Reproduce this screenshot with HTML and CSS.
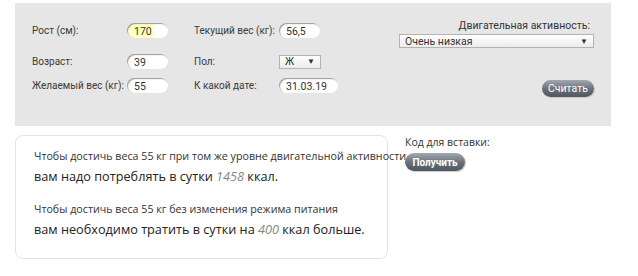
FILE: index.html
```html
<!DOCTYPE html>
<html lang="ru">
<head>
    <meta charset="UTF-8">
    <title>Калькулятор калорий</title>
    <link rel="stylesheet" href="styles.css">
</head>
<body>
    <form class="calc">
        <div class="fields">
            <div class="row">
                <label class="lbl">Рост (см):</label>
                <input class="field filled" type="text" value="170">
                <label class="lbl lbl2">Текущий вес (кг):</label>
                <input class="field" type="text" value="56,5">
            </div>
            <div class="row">
                <label class="lbl">Возраст:</label>
                <input class="field" type="text" value="39">
                <label class="lbl lbl2">Пол:</label>
                <div class="small-select">Ж <span class="arrow">&#9660;</span></div>
            </div>
            <div class="row">
                <label class="lbl">Желаемый вес (кг):</label>
                <input class="field" type="text" value="55">
                <label class="lbl lbl2">К какой дате:</label>
                <input class="field wide" type="text" value="31.03.19">
            </div>
        </div>
        <div class="activity">
            <label class="act-lbl">Двигательная активность:</label>
            <div class="big-select">Очень низкая <span class="arrow">&#9660;</span></div>
            <button type="button" class="btn btn-calc">Считать</button>
        </div>
    </form>

    <div class="bottom">
        <div class="result">
            <p class="note">Чтобы достичь веса 55 кг при том же уровне двигательной активности</p>
            <p class="main">вам надо потреблять в сутки <em>1458</em> ккал.</p>
            <p class="note">Чтобы достичь веса 55 кг без изменения режима питания</p>
            <p class="main">вам необходимо тратить в сутки на <em>400</em> ккал больше.</p>
        </div>
        <div class="embed">
            <p>Код для вставки:</p>
            <button type="button" class="btn btn-get">Получить</button>
        </div>
    </div>
</body>
</html>
```

FILE: styles.css
```css
* {
    margin: 0;
    padding: 0;
    box-sizing: border-box;
}

body {
    background: #fff;
    color: #333;
    font-family: Roboto, sans-serif;
    padding: 3px 0 0 15px;
    width: 611px;
}

.calc {
    display: flex;
    justify-content: space-between;
    background-color: #e6e6e6;
    height: 123px;
    padding: 20px 17px 0 17px;
}

.fields {
    display: flex;
    flex-direction: column;
    gap: 9px;
}

.row {
    display: flex;
    align-items: center;
    height: 15px;
}

.row:nth-child(2) {
    margin-top: 7px;
}

.lbl {
    font-size: 10px;
    color: #3a3a3a;
    width: 95px;
    white-space: nowrap;
}

.lbl2 {
    width: 85px;
    margin-left: 26px;
}

.field {
    width: 41px;
    height: 15px;
    border: none;
    border-radius: 8px;
    background: #fff;
    box-shadow: inset 1px 1px 1px #999;
    font-family: Roboto, sans-serif;
    font-size: 10.5px;
    color: #333;
    padding: 1px 0 0 7px;
    outline: none;
}

.field.filled {
    background: linear-gradient(to right, #fff 3px, #ffffc0 3px, #ffffc0 27px, #fff 27px);
}

.field.wide {
    width: 59px;
}

.small-select {
    width: 42px;
    height: 14px;
    border: 1px solid #b3b3b3;
    background: linear-gradient(#fff, #ececec);
    font-size: 10px;
    display: flex;
    align-items: center;
    justify-content: space-between;
    padding: 0 5px;
}

.arrow {
    font-size: 8px;
    color: #333;
}

.activity {
    display: flex;
    flex-direction: column;
    align-items: flex-end;
    margin-top: -4px;
}

.act-lbl {
    font-size: 10.5px;
    color: #333;
    margin-right: 4px;
    margin-bottom: 2px;
}

.big-select {
    width: 195px;
    height: 14px;
    border: 1px solid #b3b3b3;
    background: linear-gradient(#fff, #ececec);
    font-size: 10.5px;
    display: flex;
    align-items: center;
    justify-content: space-between;
    padding: 0 5px;
}

.btn {
    border: none;
    border-radius: 9px;
    background: linear-gradient(#a3a9b0, #6a737c 50%, #4e565e);
    color: #fff;
    font-family: Roboto, sans-serif;
    font-size: 10.5px;
    height: 17px;
    box-shadow: 1px 1px 1px #c8c8c8;
}

.btn-calc {
    width: 52px;
    margin-top: 32px;
}

.bottom {
    display: flex;
    margin-top: 9px;
}

.result {
    width: 373px;
    height: 124px;
    border: 1px solid #e3e3e3;
    border-radius: 8px;
    padding: 13px 0 0 18px;
    font-family: "Open Sans", sans-serif;
    white-space: nowrap;
}

.note {
    font-size: 10.7px;
    color: #333;
}

.main {
    font-size: 12.7px;
    color: #222;
    margin: 4px 0 17px;
}

.main em {
    color: #888;
}

.embed {
    margin-left: 17px;
    font-family: "Open Sans", sans-serif;
    font-size: 10.5px;
    color: #333;
    position: relative;
}

.embed p {
    line-height: 14px;
}

.btn-get {
    width: 60px;
    height: 18px;
    margin-top: 4px;
    font-weight: bold;
    font-size: 10px;
}
```
